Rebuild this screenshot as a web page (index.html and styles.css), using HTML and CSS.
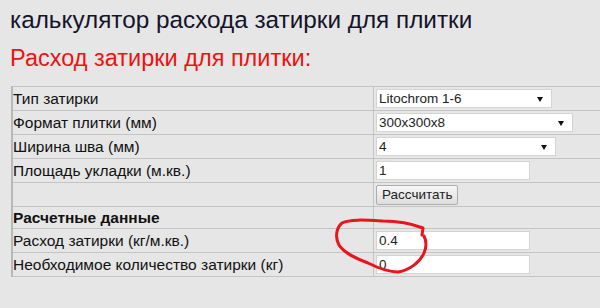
FILE: index.html
```html
<!DOCTYPE html>
<html lang="ru">
<head>
<meta charset="utf-8">
<title>Калькулятор расхода затирки</title>
<link rel="stylesheet" href="styles.css">
</head>
<body>
<div class="page">
  <h1 class="title">калькулятор расхода затирки для плитки</h1>
  <h2 class="subtitle">Расход затирки для плитки:</h2>
  <table class="calc">
    <tr>
      <td class="label">Тип затирки</td>
      <td class="field"><span class="select w1"><span class="val">Litochrom 1-6</span></span></td>
    </tr>
    <tr>
      <td class="label">Формат плитки (мм)</td>
      <td class="field"><span class="select w2"><span class="val">300x300x8</span></span></td>
    </tr>
    <tr>
      <td class="label">Ширина шва (мм)</td>
      <td class="field"><span class="select w3"><span class="val">4</span></span></td>
    </tr>
    <tr>
      <td class="label">Площадь укладки (м.кв.)</td>
      <td class="field"><span class="input">1</span></td>
    </tr>
    <tr>
      <td class="label"></td>
      <td class="field"><span class="button">Рассчитать</span></td>
    </tr>
    <tr class="head">
      <td class="label"><b>Расчетные данные</b></td>
      <td class="field"></td>
    </tr>
    <tr>
      <td class="label">Расход затирки (кг/м.кв.)</td>
      <td class="field"><span class="input">0.4</span></td>
    </tr>
    <tr>
      <td class="label">Необходимое количество затирки (кг)</td>
      <td class="field"><span class="input">0</span></td>
    </tr>
  </table>
  <svg class="mark" width="600" height="308" viewBox="0 0 600 308">
    <path d="M422 235 L423 228 C410 223 395 221 383 221 C365 220 350 219 342 223 C336 228 335 238 339 245 C344 253 355 258 368 263 C378 268 388 272 398 272 C410 270 420 262 424 253 C427 246 426 240 424 236" fill="none" stroke="#e8151b" stroke-width="3" stroke-linecap="round" stroke-linejoin="round"/>
  </svg>
</div>
</body>
</html>
```
FILE: styles.css
```css
html, body {
  margin: 0;
  padding: 0;
  background: #e6e6e6;
  overflow: hidden;
}
.page {
  position: relative;
  width: 600px;
  height: 308px;
  padding: 0 0 0 10px;
  box-sizing: border-box;
  font-family: "Liberation Sans", Arial, sans-serif;
}
.title {
  margin: 0;
  padding-top: 6px;
  font-size: 24.3px;
  line-height: 28px;
  font-weight: normal;
  color: #14142a;
}
.subtitle {
  margin: 0;
  padding-top: 10px;
  font-size: 23.5px;
  line-height: 28px;
  font-weight: normal;
  color: #ee1111;
}
.calc {
  margin-top: 14px;
  margin-left: 1px;
  border-collapse: collapse;
  width: 600px;
  font-size: 15.5px;
  color: #111;
}
.calc td {
  border: 1px solid #c4c4c4;
  height: 23px;
  padding: 0;
  vertical-align: middle;
}
.calc tr.head td {
  height: 21px;
}
.calc td.label {
  width: 360px;
  border-left: 2px solid #b8b8b8;
}
.calc td.field {
  padding-left: 2px;
}
.select, .input {
  display: inline-flex;
  align-items: center;
  position: relative;
  box-sizing: border-box;
  height: 19px;
  background: #fff;
  border: 1px solid #d4d4d4;
  font-size: 13.5px;
  padding-left: 2px;
  color: #222;
  vertical-align: middle;
}
.select::after {
  content: "";
  position: absolute;
  right: 8px;
  top: 7px;
  border-left: 3px solid transparent;
  border-right: 3px solid transparent;
  border-top: 5px solid #111;
}
.w1 { width: 176px; }
.w2 { width: 197px; }
.w3 { width: 180px; }
.input { width: 154px; }
.button {
  display: inline-flex;
  align-items: center;
  box-sizing: border-box;
  height: 20px;
  padding: 0 5px;
  font-size: 13.5px;
  color: #222;
  background: linear-gradient(#f6f6f6, #dedede);
  border: 1px solid #adadad;
  border-radius: 2px;
  vertical-align: middle;
}
.mark {
  position: absolute;
  left: 0;
  top: 0;
  pointer-events: none;
}
```
